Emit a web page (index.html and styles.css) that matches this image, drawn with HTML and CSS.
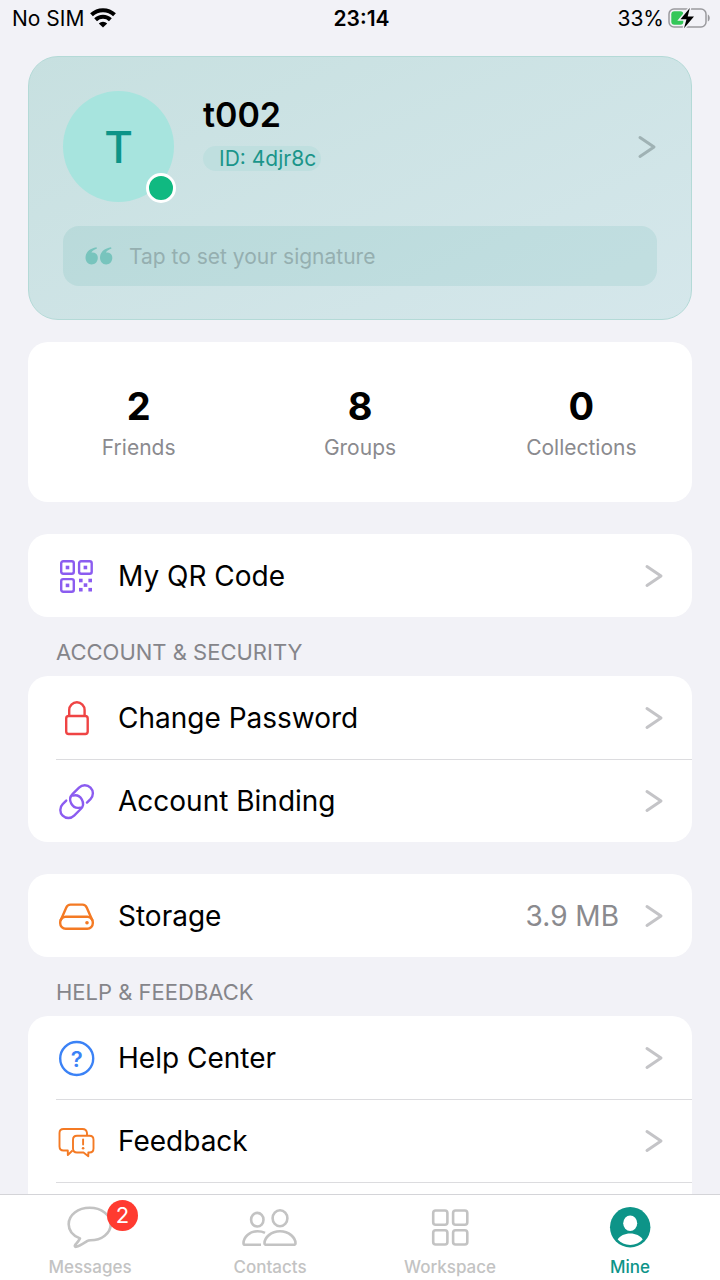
FILE: index.html
```html
<!DOCTYPE html>
<html lang="en">
<head>
  <meta charset="utf-8">
  <meta name="viewport" content="width=device-width, initial-scale=1">
  <title>Mine</title>
  <link rel="stylesheet" href="styles.css">
</head>
<body>

<svg width="0" height="0" class="sprite" aria-hidden="true">
  <symbol id="chevron" viewBox="0 0 20 26">
    <path d="M3 3.500L17 13L3 22.500" fill="none" stroke="currentColor" stroke-width="3" stroke-linecap="round" stroke-linejoin="round"/>
  </symbol>
</svg>

<!-- Status bar -->
<header class="status-bar">
  <div class="status-left">
    <span>No SIM</span>
    <svg width="26" height="20" viewBox="0 0 26 20">
      <g fill="none" stroke="#000" stroke-width="4">
        <path d="M1.500 6.800a16.500 16.500 0 0 1 23 0"/>
        <path d="M5.600 11.700a10.600 10.600 0 0 1 14.800 0"/>
      </g>
      <path d="M13 19.500L8.800 15.500a6 6 0 0 1 8.400 0z"/>
    </svg>
  </div>
  <div class="status-time">23:14</div>
  <div class="status-right">
    <span>33%</span>
    <svg width="43" height="22" viewBox="0 0 43 22">
      <rect x="1" y="2" width="37" height="18" rx="5" fill="none" stroke="#9a9a9e" stroke-width="1.500"/>
      <path d="M39.800 7.500c2.600 1 2.600 6 0 7z" fill="#9a9a9e"/>
      <rect x="3.300" y="4.300" width="12" height="13.400" rx="3" fill="#34c759"/>
      <path d="M21.800 1L12.500 12.300h6L16 21.200l10-11.700h-6.300z" fill="#000" stroke="#f2f2f7" stroke-width="3" paint-order="stroke"/>
    </svg>
  </div>
</header>

<main class="content">
  <!-- Profile -->
  <section class="profile">
    <a class="profile-top" href="#profile">
      <div class="avatar">T<span class="online"></span></div>
      <div class="profile-info">
        <h1 class="name">t002</h1>
        <span class="user-id">ID: 4djr8c</span>
      </div>
      <svg class="chevron" width="20" height="26"><use href="#chevron"/></svg>
    </a>
    <button class="signature" type="button">
      <svg width="28" height="20" viewBox="0 0 28 20">
        <path id="quote" d="M11.500 1.200L12 2.400C8.800 3.500 6.900 4.900 6.400 6.600c.5-.2 1-.2 1.400-.2 2.900 0 5 2.200 5 5.600 0 3.700-2.800 6.500-6.200 6.500C3 18.500.5 15.800.5 11.600.5 6.400 4.700 2.300 11.500 1.200z" fill="currentColor"/>
        <use href="#quote" x="14.500"/>
      </svg>
      <span>Tap to set your signature</span>
    </button>
  </section>

  <!-- Counters -->
  <section class="card stats">
    <a class="stat" href="#friends"><strong>2</strong><span>Friends</span></a>
    <a class="stat" href="#groups"><strong>8</strong><span>Groups</span></a>
    <a class="stat" href="#collections"><strong>0</strong><span>Collections</span></a>
  </section>

  <nav class="card menu">
    <a class="row" href="#qr">
      <svg class="icon purple" viewBox="0 0 40 40">
        <rect x="5.200" y="5.200" width="12.600" height="12.600" rx="2"/>
        <rect x="23.100" y="5.200" width="12.600" height="12.600" rx="2"/>
        <rect x="5.200" y="23.100" width="12.600" height="12.600" rx="2"/>
        <g fill="currentColor" stroke="none">
          <rect x="9.700" y="9.700" width="3.600" height="3.600"/>
          <rect x="27.600" y="9.700" width="3.600" height="3.600"/>
          <rect x="9.700" y="27.600" width="3.600" height="3.600"/>
          <rect x="23" y="22.700" width="3.600" height="3.600"/>
          <rect x="32.400" y="22.700" width="3.600" height="3.600"/>
          <rect x="27.700" y="27.300" width="3.600" height="3.600"/>
          <rect x="23" y="31.900" width="3.600" height="3.600"/>
          <rect x="32.400" y="31.900" width="3.600" height="3.600"/>
        </g>
      </svg>
      <span class="label">My QR Code</span>
      <svg class="chevron" width="20" height="26"><use href="#chevron"/></svg>
    </a>
  </nav>

  <h2 class="group-title">ACCOUNT &amp; SECURITY</h2>
  <nav class="card menu">
    <a class="row" href="#password">
      <svg class="icon red" viewBox="0 0 40 40">
        <rect x="10.200" y="18" width="21.500" height="18" rx="2.500"/>
        <path d="M13.200 18V12a7.700 7.700 0 0 1 15.400 0v6"/>
      </svg>
      <span class="label">Change Password</span>
      <svg class="chevron" width="20" height="26"><use href="#chevron"/></svg>
    </a>
    <a class="row" href="#binding">
      <svg class="icon purple" viewBox="0 0 40 40">
        <path id="link" transform="translate(25.600 15.500) rotate(-45)" d="M-.5 8.100H4.500A8.100 8.100 0 0 0 4.500-8.100H-4.500A8.100 8.100 0 0 0-8.800 6.900" stroke-linecap="round"/>
        <use href="#link" transform="rotate(180 20.600 20.600)"/>
      </svg>
      <span class="label">Account Binding</span>
      <svg class="chevron" width="20" height="26"><use href="#chevron"/></svg>
    </a>
  </nav>

  <nav class="card menu spaced">
    <a class="row" href="#storage">
      <svg class="icon orange" viewBox="0 0 40 40">
        <path d="M4.600 24.500L10.300 11.500Q11.500 8.600 14.500 8.600H26.500Q29.500 8.600 30.700 11.500L36.400 24.500"/>
        <rect x="4.200" y="20.800" width="32.600" height="12" rx="5.500"/>
        <circle cx="31" cy="26.700" r="1.800" fill="currentColor" stroke="none"/>
      </svg>
      <span class="label">Storage</span>
      <span class="value">3.9 MB</span>
      <svg class="chevron" width="20" height="26"><use href="#chevron"/></svg>
    </a>
  </nav>

  <h2 class="group-title">HELP &amp; FEEDBACK</h2>
  <nav class="card menu">
    <a class="row" href="#help">
      <svg class="icon blue" viewBox="0 0 40 40">
        <circle cx="20.700" cy="20.500" r="16.500"/>
        <text x="20.700" y="28.500" text-anchor="middle" class="icon-mark">?</text>
      </svg>
      <span class="label">Help Center</span>
      <svg class="chevron" width="20" height="26"><use href="#chevron"/></svg>
    </a>
    <a class="row" href="#feedback">
      <svg class="icon orange thin" viewBox="0 0 40 40">
        <path d="M16.500 29.500l-4.700 4.500v-4.500H7.500Q3.500 29.500 3.500 25.500V12Q3.500 8 7.500 8H26.500Q30.500 8 31 12V14.500"/>
        <path d="M21 14.700H33.500Q37.500 14.700 37.500 18.700V27.500Q37.500 31.500 33.500 31.500H32.300V35.200L27.500 31.500H21Q17 31.500 17 27.500V18.700Q17 14.700 21 14.700z"/>
        <path d="M27.100 18.500v5" stroke-linecap="round"/>
        <circle cx="27.100" cy="27.200" r="1.300" fill="currentColor" stroke="none"/>
      </svg>
      <span class="label">Feedback</span>
      <svg class="chevron" width="20" height="26"><use href="#chevron"/></svg>
    </a>
    <div class="row"></div>
  </nav>
</main>

<!-- Tab bar -->
<nav class="tab-bar">
  <a class="tab" href="#messages">
    <svg viewBox="0 0 60 48">
      <path d="M20 35.400C13 32.700 8.700 27.500 8.700 21.200 8.700 12 18 4.800 29.700 4.800S50.700 12 50.700 21.200 41.500 37.300 30.500 37.300c-1.500 0-2.500.2-3.500.8-3.300 2.100-7 4.800-10.800 5.700-1.400.3-1.800-.9-1-1.900 1.700-2 3.500-3.800 4.800-6.500z"/>
    </svg>
    <span class="tab-label">Messages</span>
    <span class="badge">2</span>
  </a>
  <a class="tab" href="#contacts">
    <svg viewBox="0 0 60 48">
      <ellipse cx="17.300" cy="16.700" rx="6.200" ry="6.800"/>
      <ellipse cx="40" cy="15.300" rx="7.400" ry="8"/>
      <path d="M40 28.300c9 0 15.500 6.200 15.500 12 0 1.200-.8 1.500-2 1.500h-27c-1.200 0-2-.3-2-1.500 0-5.800 6.500-12 15.500-12z"/>
      <path d="M25 29.800c-2-1-4.700-1.600-7.500-1.600-8 0-14 6-14 12 0 1.200.7 1.600 1.800 1.600H21"/>
    </svg>
    <span class="tab-label">Contacts</span>
  </a>
  <a class="tab" href="#workspace">
    <svg viewBox="0 0 60 48">
      <rect x="13.200" y="7.500" width="14.200" height="14.200" rx="2.500"/>
      <rect x="33.100" y="7.500" width="14.200" height="14.200" rx="2.500"/>
      <rect x="13.200" y="27.300" width="14.200" height="14.200" rx="2.500"/>
      <rect x="33.100" y="27.300" width="14.200" height="14.200" rx="2.500"/>
    </svg>
    <span class="tab-label">Workspace</span>
  </a>
  <a class="tab active" href="#mine">
    <svg viewBox="0 0 60 48">
      <circle cx="30.200" cy="24.200" r="20.200" fill="currentColor" stroke="none"/>
      <g fill="#fff" stroke="none">
        <ellipse cx="30.200" cy="20.300" rx="7" ry="7.800"/>
        <path d="M17.700 36.500c2.300-3.600 7-5.900 12.500-5.900s10.200 2.300 12.500 5.900c-3 3.400-7.500 5.500-12.500 5.500s-9.500-2.100-12.500-5.500z"/>
      </g>
    </svg>
    <span class="tab-label">Mine</span>
  </a>
</nav>

</body>
</html>
```
FILE: styles.css
```css
* {
  box-sizing: border-box;
}

body {
  margin: 0;
  height: 100vh;
  display: flex;
  flex-direction: column;
  overflow: hidden;
  background: #f2f2f7;
  color: #000;
  font-family: Inter, "Liberation Sans", sans-serif;
}

a {
  color: inherit;
  text-decoration: none;
}

h1, h2 {
  margin: 0;
}

.sprite {
  position: absolute;
}

/* Status bar */
.status-bar {
  flex: none;
  display: grid;
  grid-template-columns: 1fr auto 1fr;
  align-items: center;
  height: 36px;
  padding: 0 9px 0 12px;
  font-size: 21px;
}

.status-left,
.status-right {
  display: flex;
  align-items: center;
  gap: 6px;
}

.status-right {
  justify-content: flex-end;
  gap: 4px;
}

.status-time {
  font-weight: 600;
}

.content {
  flex: 1;
  min-height: 0;
  overflow-y: auto;
  scrollbar-width: none;
  padding: 20px 28px 0;
}

/* Profile card */
.profile {
  display: flex;
  flex-direction: column;
  gap: 24px;
  padding: 34px 34px 33px;
  border: 1px solid #b4dad7;
  border-radius: 30px;
  background: linear-gradient(155deg, #c7e0e0, #d5e7eb);
}

.profile-top {
  display: flex;
  align-items: center;
  gap: 29px;
}

.avatar {
  position: relative;
  display: flex;
  align-items: center;
  justify-content: center;
  width: 111px;
  height: 111px;
  border-radius: 50%;
  background: #a7e4de;
  color: #0d9488;
  font-size: 44px;
  font-weight: 500;
}

.online {
  position: absolute;
  right: -2px;
  bottom: -1px;
  width: 30px;
  height: 30px;
  border: 3px solid #fff;
  border-radius: 50%;
  background: #10b981;
}

.profile-info {
  flex: 1;
  align-self: flex-start;
  padding-top: 4px;
}

.name {
  margin-bottom: 11px;
  font-size: 34px;
  font-weight: 600;
  line-height: 40px;
}

.user-id {
  display: block;
  width: fit-content;
  padding: 0 5px 0 16px;
  border-radius: 13px;
  background: #bfdfdf;
  color: #1a958a;
  font-size: 21px;
  line-height: 25px;
}

.signature {
  display: flex;
  align-items: center;
  gap: 16px;
  height: 60px;
  padding: 0 22px;
  border: none;
  border-radius: 16px;
  background: rgba(13, 148, 136, 0.09);
  color: #95afb0;
  font: inherit;
  font-size: 21px;
  text-align: left;
}

.signature svg {
  color: #78c4bd;
}

.chevron {
  flex: none;
  color: #c4c4c7;
}

.profile .chevron {
  color: #9fb2b4;
}

/* Cards */
.card {
  border-radius: 20px;
  background: #fff;
}

.stats {
  display: grid;
  grid-template-columns: repeat(3, 1fr);
  margin: 22px 0 32px;
  padding: 42px 0;
}

.stat {
  display: flex;
  flex-direction: column;
  align-items: center;
  gap: 8px;
}

.stat strong {
  font-size: 38px;
  font-weight: 700;
  line-height: 44px;
}

.stat span {
  color: #8a8a8e;
  font-size: 21px;
  line-height: 24px;
}

.menu {
  padding-left: 28px;
}

.spaced {
  margin-top: 32px;
}

.row {
  display: flex;
  align-items: center;
  height: 83px;
  padding-right: 28px;
}

.row + .row {
  border-top: 1px solid #dcdcdf;
}

.icon {
  width: 40px;
  height: 40px;
  margin-right: 22px;
  fill: none;
  stroke: currentColor;
  stroke-width: 2.4;
  stroke-linejoin: round;
}

.thin {
  stroke-width: 1.9;
}

.icon-mark {
  fill: currentColor;
  stroke: none;
  font-size: 22px;
  font-weight: 600;
}

.purple { color: #8b5cf0; }
.red { color: #ef4444; }
.orange { color: #f47a24; }
.blue { color: #3b82f6; }

.label {
  flex: 1;
  font-size: 28px;
}

.value {
  margin-right: 25px;
  color: #8a8a8e;
  font-size: 28px;
}

.group-title {
  padding: 20px 28px 9px;
  color: #85858a;
  font-size: 22px;
  font-weight: 400;
  line-height: 30px;
}

/* Tab bar */
.tab-bar {
  flex: none;
  display: grid;
  grid-template-columns: repeat(4, 1fr);
  height: 86px;
  border-top: 1px solid #d4d4d8;
  background: #fff;
}

.tab {
  position: relative;
  display: flex;
  flex-direction: column;
  align-items: center;
  gap: 5px;
  padding-top: 8px;
  color: #c3c3c3;
}

.tab svg {
  width: 60px;
  height: 48px;
  fill: none;
  stroke: currentColor;
  stroke-width: 2.6;
  stroke-linejoin: round;
}

.tab-label {
  font-size: 17px;
  font-weight: 500;
  line-height: 22px;
}

.active {
  color: #0d9488;
}

.badge {
  position: absolute;
  top: 5px;
  left: calc(50% + 17px);
  width: 31px;
  height: 31px;
  border-radius: 50%;
  background: #ff3b30;
  color: #fff;
  font-size: 22px;
  line-height: 31px;
  text-align: center;
}
```
